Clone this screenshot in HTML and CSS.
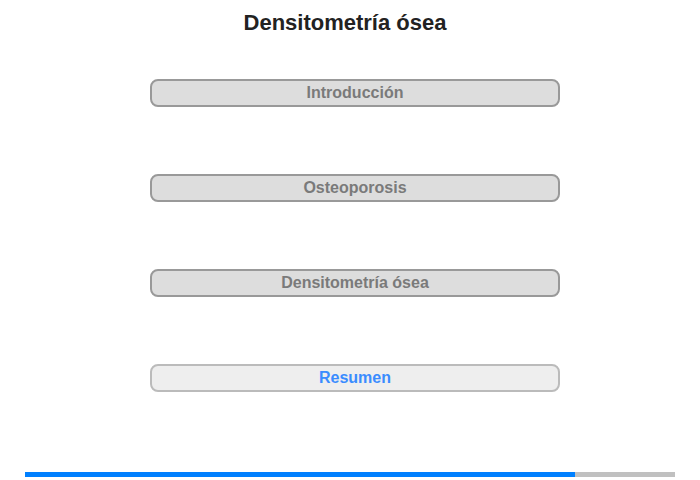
FILE: index.html
```html
<!DOCTYPE html>
<html lang="es">
<head>
  <meta charset="UTF-8">
  <title>Densitometría ósea</title>
  <link rel="stylesheet" href="styles.css">
</head>
<body>
  <h1 class="title">Densitometría ósea</h1>

  <div class="menu">
    <button class="item">Introducción</button>
    <button class="item">Osteoporosis</button>
    <button class="item">Densitometría ósea</button>
    <button class="item current">Resumen</button>
  </div>

  <div class="progress">
    <div class="progress-fill"></div>
  </div>
</body>
</html>
```

FILE: styles.css
```css
body {
  margin: 0;
  width: 700px;
  height: 480px;
  font-family: "Liberation Sans", Arial, sans-serif;
  background: #fff;
  position: relative;
}

.title {
  margin: 0;
  padding: 11px 10px 0 0;
  height: 24px;
  line-height: 24px;
  text-align: center;
  font-size: 22px;
  font-weight: bold;
  color: #222;
}

.menu {
  display: flex;
  flex-direction: column;
  align-items: center;
  gap: 67px;
  margin-top: 44px;
  padding-left: 10px;
}

.item {
  width: 410px;
  height: 28px;
  border: 2px solid #999;
  border-radius: 8px;
  background: #ddd;
  color: #7a7a7a;
  font-family: "Liberation Sans", Arial, sans-serif;
  font-size: 16px;
  font-weight: bold;
  padding: 0;
  cursor: pointer;
}

.item.current {
  background: #eee;
  border-color: #bbb;
  color: #3a8cff;
}

.progress {
  position: absolute;
  left: 25px;
  top: 472px;
  width: 650px;
  height: 5px;
  background: #c0c0c0;
}

.progress-fill {
  width: 550px;
  height: 100%;
  background: #0080ff;
}
```
